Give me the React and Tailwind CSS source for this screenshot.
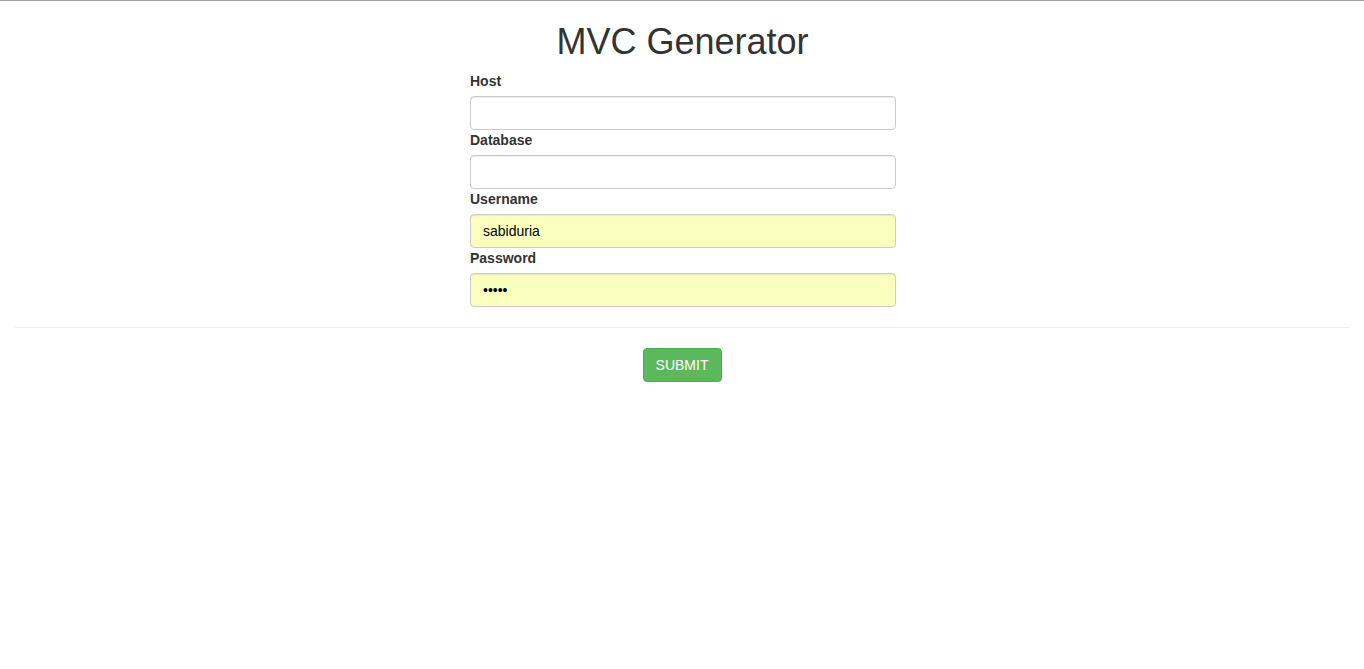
export default function App() {
  const fields = [
    { id: "host", label: "Host", type: "text", value: "" },
    { id: "database", label: "Database", type: "text", value: "" },
    { id: "username", label: "Username", type: "text", value: "sabiduria", filled: true },
    { id: "password", label: "Password", type: "password", value: "12345", filled: true },
  ];

  return (
    <div className="min-h-[669px] bg-white border-t border-[#a0a0a0] font-['Liberation_Sans',Arial,sans-serif] text-[14px] leading-[20px] text-[#333]">
      <div className="px-[15px]">
        <h1 className="mt-[21px] mb-[9px] pl-[1px] text-center text-[36px] leading-[39.6px] font-normal text-[#333]">MVC Generator</h1>

        <form className="w-[426px] ml-[calc(50%-212px)]" onSubmit={(e) => e.preventDefault()}>
          {fields.map((f) => (
            <div key={f.id} className="flex flex-col">
              <label htmlFor={f.id} className="mb-[5px] font-bold text-[14px] leading-[20px]">{f.label}</label>
              <input
                id={f.id}
                name={f.id}
                type={f.type}
                defaultValue={f.value}
                className={
                  "h-[34px] w-full px-[12px] py-[6px] border border-[#ccc] rounded-[4px] text-[14px] outline-none shadow-[inset_0_1px_1px_rgba(0,0,0,0.075)] " +
                  (f.filled ? "bg-[#faffbd] text-black" : "bg-white text-[#555]")
                }
              />
            </div>
          ))}
        </form>

        <hr className="mt-[20px] mb-[20px] border-0 border-t border-[#eee]" />

        <div className="flex justify-center">
          <button
            type="submit"
            className="h-[34px] w-[79px] bg-[#5cb85c] border border-[#4cae4c] rounded-[4px] text-white text-[14px] leading-[20px]"
          >
            SUBMIT
          </button>
        </div>
      </div>
    </div>
  );
}
